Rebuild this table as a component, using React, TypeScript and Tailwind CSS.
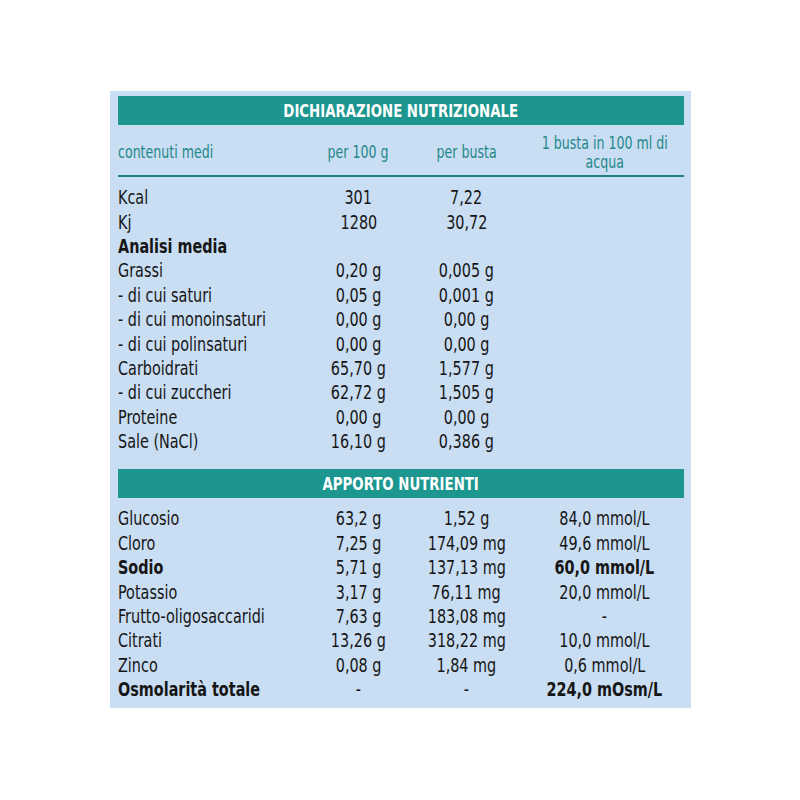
const font = "font-['DejaVu_Sans_Condensed','DejaVu_Sans',sans-serif]"

type Row = { label: string; a?: string; b?: string; c?: string; bold?: boolean; boldC?: boolean }

const dichiarazione: Row[] = [
  { label: 'Kcal', a: '301', b: '7,22' },
  { label: 'Kj', a: '1280', b: '30,72' },
  { label: 'Analisi media', bold: true },
  { label: 'Grassi', a: '0,20 g', b: '0,005 g' },
  { label: '- di cui saturi', a: '0,05 g', b: '0,001 g' },
  { label: '- di cui monoinsaturi', a: '0,00 g', b: '0,00 g' },
  { label: '- di cui polinsaturi', a: '0,00 g', b: '0,00 g' },
  { label: 'Carboidrati', a: '65,70 g', b: '1,577 g' },
  { label: '- di cui zuccheri', a: '62,72 g', b: '1,505 g' },
  { label: 'Proteine', a: '0,00 g', b: '0,00 g' },
  { label: 'Sale (NaCl)', a: '16,10 g', b: '0,386 g' },
]

const apporto: Row[] = [
  { label: 'Glucosio', a: '63,2 g', b: '1,52 g', c: '84,0 mmol/L' },
  { label: 'Cloro', a: '7,25 g', b: '174,09 mg', c: '49,6 mmol/L' },
  { label: 'Sodio', a: '5,71 g', b: '137,13 mg', c: '60,0 mmol/L', bold: true, boldC: true },
  { label: 'Potassio', a: '3,17 g', b: '76,11 mg', c: '20,0 mmol/L' },
  { label: 'Frutto-oligosaccaridi', a: '7,63 g', b: '183,08 mg', c: '-' },
  { label: 'Citrati', a: '13,26 g', b: '318,22 mg', c: '10,0 mmol/L' },
  { label: 'Zinco', a: '0,08 g', b: '1,84 mg', c: '0,6 mmol/L' },
  { label: 'Osmolarità totale', a: '-', b: '-', c: '224,0 mOsm/L', bold: true, boldC: true },
]

const cols = 'grid grid-cols-[186px_110px_106px_170px]'

// the print uses a condensed face; squeeze DejaVu Condensed a bit more
function Narrow({ children, left }: { children: React.ReactNode; left?: boolean }) {
  return (
    <span className={`inline-block whitespace-nowrap scale-x-80 ${left ? 'origin-left' : 'origin-center'}`}>
      {children}
    </span>
  )
}

function Rows({ rows }: { rows: Row[] }) {
  return (
    <div>
      {rows.map((r, i) => (
        <div key={i} className={`${cols} h-[24.4px] items-center leading-none`}>
          <div className={r.bold ? 'font-bold' : ''}>
            <Narrow left>{r.label}</Narrow>
          </div>
          <div className="text-center">{r.a && <Narrow>{r.a}</Narrow>}</div>
          <div className="text-center">{r.b && <Narrow>{r.b}</Narrow>}</div>
          <div className={`text-center ${r.boldC ? 'font-bold' : ''}`}>{r.c && <Narrow>{r.c}</Narrow>}</div>
        </div>
      ))}
    </div>
  )
}

export default function App() {
  return (
    <div className={`min-h-screen bg-white pt-[91px] ${font}`}>
      <div className="mx-auto w-[581px] h-[617px] bg-[#c9ddf3] px-[8px] pt-[5px] text-[20px] text-[#161616]">
        <div className="h-[29px] bg-[#1c968f] flex items-center justify-center text-white font-bold text-[18.5px] w-[566px]">
          <Narrow>DICHIARAZIONE NUTRIZIONALE</Narrow>
        </div>
        <div className={`${cols} h-[52px] pt-[5px] items-center text-[#23888a] text-[17.5px] leading-[19px] border-b-[2.5px] border-[#237f80] w-[566px]`}>
          <div><Narrow left>contenuti medi</Narrow></div>
          <div className="text-center"><Narrow>per 100 g</Narrow></div>
          <div className="text-center"><Narrow>per busta</Narrow></div>
          <div className="text-center">
            <Narrow>
              1 busta in 100 ml di
              <br />
              acqua
            </Narrow>
          </div>
        </div>
        <div className="pt-[8px]">
          <Rows rows={dichiarazione} />
        </div>
        <div className="mt-[16px] h-[29px] bg-[#1c968f] flex items-center justify-center text-white font-bold text-[18.5px] w-[566px]">
          <Narrow>APPORTO NUTRIENTI</Narrow>
        </div>
        <div className="pt-[8px]">
          <Rows rows={apporto} />
        </div>
      </div>
    </div>
  )
}
